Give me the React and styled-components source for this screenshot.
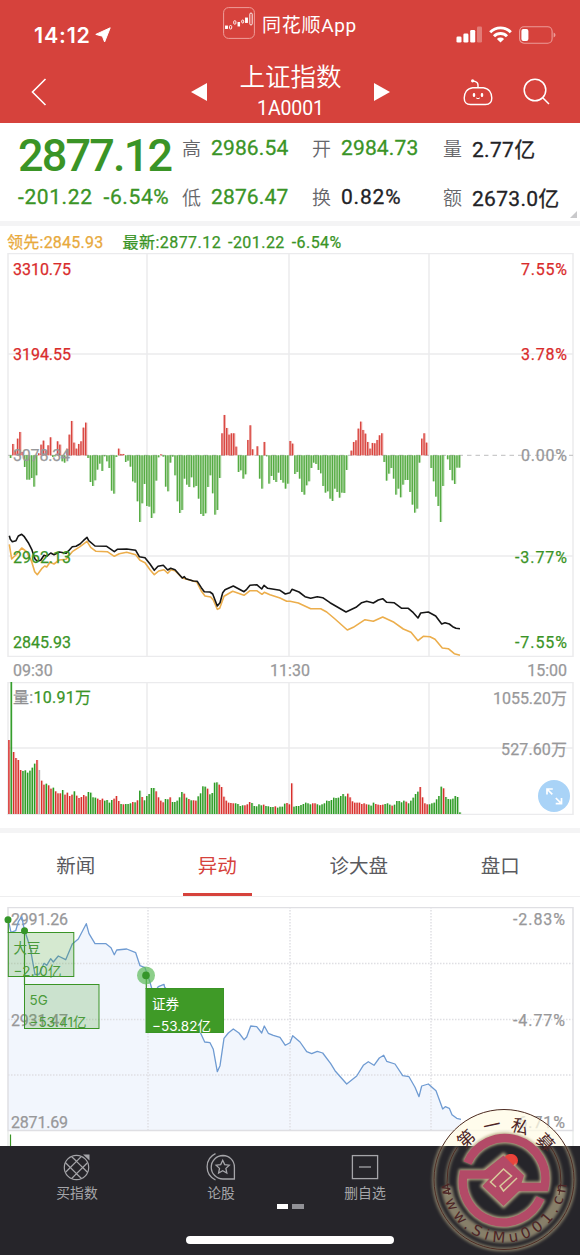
import styled, { createGlobalStyle } from "styled-components";

const RED = "#d6423c";
const UP = "#d92b2b";
const DOWN = "#3a9426";
const GREY = "#98989a";
const LINE = "#ebebed";

const GlobalStyle = createGlobalStyle`
  * {
    box-sizing: border-box;
  }
  body {
    margin: 0;
    background: #fff;
    font-family: Roboto, "Noto Sans CJK SC", sans-serif;
  }
  svg {
    display: block;
    flex: none;
  }
`;

const Screen = styled.div`
  position: relative;
  width: 580px;
  height: 1255px;
  overflow: hidden;
  display: flex;
  flex-direction: column;
`;

/* header */

const Header = styled.header`
  height: 123px;
  flex: none;
  background: ${RED};
  color: #fff;
`;

const StatusBar = styled.div`
  display: grid;
  grid-template-columns: 187px 206px 187px;
  height: 56px;
`;

const Clock = styled.div`
  display: flex;
  align-items: center;
  gap: 4px;
  padding: 13px 0 0 34px;
  font-family: Inter, sans-serif;
  font-size: 21.5px;
  font-weight: 600;
  letter-spacing: 0.8px;
`;

const AppName = styled.div`
  display: flex;
  align-items: center;
  justify-content: center;
  gap: 7px;
  height: 46px;
  font-size: 19px;
  letter-spacing: 0.7px;
`;

const StatusIcons = styled.div`
  display: flex;
  justify-content: flex-end;
  align-items: center;
  gap: 7px;
  padding: 13px 24px 0 0;
`;

const TitleBar = styled.div`
  display: flex;
  align-items: center;
  height: 67px;
  padding: 4px 30px 0 31px;
`;

const TitleSwitch = styled.div`
  display: flex;
  align-items: center;
  gap: 31px;
  margin-left: 144px;
`;

const TitleText = styled.div`
  width: 105px;
  text-align: center;
`;

const Name = styled.div`
  font-size: 25.5px;
  line-height: 31px;
  font-weight: 350;
  white-space: nowrap;
`;

const Code = styled.div`
  font-size: 19.5px;
  line-height: 26px;
  padding-top: 3px;
  letter-spacing: -0.1px;
`;

const HeaderIcons = styled.div`
  display: flex;
  align-items: center;
  gap: 30px;
  margin-left: auto;
`;

/* quote */

const Quote = styled.section`
  position: relative;
  display: flex;
  height: 98px;
  flex: none;
`;

const PriceBox = styled.div`
  width: 182px;
  padding-left: 18px;
  color: ${DOWN};
  white-space: nowrap;
`;

const Price = styled.div`
  height: 61px;
  line-height: 65px;
  font-size: 45px;
  font-weight: 500;
  letter-spacing: -1.8px;
`;

const Change = styled.div`
  display: flex;
  gap: 11px;
  line-height: 27px;
  font-size: 21px;
  letter-spacing: 0.6px;
  -webkit-text-stroke: 0.3px;
`;

const Stats = styled.div`
  display: grid;
  grid-template-columns: 130px 131px 130px;
  grid-template-rows: 49px 49px;
`;

const Stat = styled.div`
  display: flex;
  align-items: center;
  gap: 10px;
  font-size: 21px;
  white-space: nowrap;
  letter-spacing: ${(p) => p.$spacing || "0.15px"};
  color: ${(p) => (p.$down ? DOWN : "#222226")};
  -webkit-text-stroke: 0.3px;
`;

const StatName = styled.span`
  font-size: 19px;
  font-weight: 350;
  letter-spacing: 0;
  color: #66666a;
  -webkit-text-stroke: 0;
`;

const Corner = styled.i`
  position: absolute;
  right: 3px;
  bottom: 3px;
  border-left: 7px solid transparent;
  border-bottom: 7px solid #c9c9cb;
`;

const Band = styled.div`
  height: ${(p) => p.$size}px;
  flex: none;
  background: #f4f4f5;
`;

const Legend = styled.div`
  display: flex;
  gap: 19px;
  height: 27px;
  flex: none;
  align-items: center;
  padding: 6px 0 0 7px;
  font-size: 16px;
  line-height: 20px;
  white-space: nowrap;
  -webkit-text-stroke: 0.25px;
`;

const Leader = styled.span`
  color: #e8a93c;
  letter-spacing: 0.25px;
`;

const Latest = styled.span`
  color: ${DOWN};
  letter-spacing: 0.45px;
  word-spacing: 2.5px;
`;

/* charts */

const Plot = styled.svg`
  width: 580px;
  height: ${(p) => p.$height}px;
`;

const AxisText = styled.text`
  font-family: Roboto, "Noto Sans CJK SC", sans-serif;
  font-size: 16px;
  fill: ${(p) => p.$color || GREY};
  stroke: ${(p) => p.$color || GREY};
  stroke-width: 0.25px;
`;

const TagText = styled.text`
  font-family: Inter, "Noto Sans CJK SC", sans-serif;
  font-size: 13.5px;
  fill: ${(p) => p.$color};
`;

const Times = styled.div`
  display: flex;
  justify-content: space-between;
  align-items: center;
  height: 25px;
  flex: none;
  padding: 1px 13px 0;
  font-size: 16px;
  color: ${GREY};
  -webkit-text-stroke: 0.25px;
`;

const VolumeBox = styled.div`
  position: relative;
  height: 146px;
  flex: none;
`;

const Expand = styled.button`
  position: absolute;
  left: 538px;
  top: 98px;
  width: 32px;
  height: 32px;
  padding: 0;
  border: 0;
  border-radius: 50%;
  background: #a9d3f7;
`;

const Tabs = styled.nav`
  display: grid;
  grid-template-columns: repeat(4, 141.5px);
  padding-left: 5px;
  height: 64px;
  flex: none;
  border-bottom: 1px solid #eeeeef;
  margin-bottom: 10px;
`;

const Tab = styled.div`
  display: flex;
  align-items: center;
  justify-content: center;
  font-size: 19.5px;
  padding-top: 3px;
  color: ${(p) => (p.$active ? RED : "#5a5a5e")};
`;

const TabLabel = styled.span`
  display: flex;
  align-items: center;
  justify-content: center;
  min-width: 69px;
  height: 60px;
  border-bottom: 3px solid ${(p) => (p.$active ? RED : "transparent")};
`;

/* bottom bar */

const BottomBar = styled.footer`
  height: 109px;
  margin-top: auto;
  flex: none;
  background: #26252a;
  display: flex;
  flex-direction: column;
  align-items: center;
`;

const Actions = styled.div`
  display: grid;
  grid-template-columns: repeat(4, 144px);
  width: 100%;
  height: 58px;
  padding-left: 5px;
`;

const Action = styled.div`
  display: flex;
  flex-direction: column;
  align-items: center;
  gap: 2px;
  padding-top: 6px;
  font-size: 13.8px;
  line-height: 20px;
  color: #a5a5a9;
`;

const Dot = styled.i`
  width: 13px;
  height: 13px;
  margin: 2px 0 0 4px;
  border-radius: 50%;
  background: #ee3c35;
`;

const Pager = styled.div`
  display: flex;
  gap: 4px;
`;

const Page = styled.i`
  width: 11.5px;
  height: 5px;
  background: ${(p) => (p.$active ? "#fff" : "#919196")};
`;

const HomeBar = styled.div`
  width: 208px;
  height: 8px;
  margin-top: 27px;
  border-radius: 4px;
  background: #fff;
`;

const StampLayer = styled.svg`
  position: absolute;
  left: 428px;
  top: 1104px;
`;

// heights are in thirds of a pixel, positive is a rise
const FLOW = `-8 34 14 50 70 10 -35 -73 -73 -68 -94 -60 6 32 44 14 30 54 -5 -3 42 32 -18 -22 20 62 103 38 20 34
42 83 98 -8 -80 -92 -75 -43 -25 -47 -3 -18 -38 -106 -115 -5 20 4 4 -20 -16 -34 -78 -82 -138 -200 -144 -86 -152 -154
-188 -174 -76 -6 3 -4 -94 -108 -22 -4 -60 -138 -173 -164 -70 -88 -95 -66 -96 -92 -130 -176 -182 -174 -95 -60 -114 -178
-164 -68 66 121 82 62 66 66 26 -50 -45 -70 -57 46 90 18 0 27 -70 -100 40 -3 -85 -62 -74 -80 -52 -74 -82 -100 -85 43 35
-56 -50 -70 -110 -118 -90 -78 -38 -22 -26 -44 -54 -92 -112 -108 -130 -137 -100 -110 -127 -112 -113 -44 0 14 40 45 80
101 76 65 40 20 37 36 46 60 66 -20 -76 -55 -38 -70 -118 -100 -126 -88 -74 -74 -110 -148 -172 -160 -22 50 66 38 0 -38
-78 -124 -152 -200 -92 0 -12 -44 -75 -86 -37 -37`.split(/\s+/).map(Number);

const VOLUME = `r222 g396 r186 r168 r162 r132 g129 g131 g124 g130 g139 g151 r162 x132 r100 r88 g91 r86 r76 g79 r68 r62 r62
g72 r58 r64 r54 r58 g68 r55 r48 r51 r57 r53 g66 g64 g50 g49 r46 r42 r46 g40 g42 g34 g42 r46 r54 r39 g30 r29 g30 g30 g32
r36 g35 r41 g70 r51 g41 g54 g60 g78 g78 r68 r50 r40 r35 g45 g44 r50 g36 g36 g40 g50 g66 r61 g49 r45 g41 r41 r40 g53 g62
g83 g82 r76 g59 g63 g94 g95 r88 r81 r52 r40 r34 r33 r32 g32 g30 g24 g26 r26 r29 r36 g33 g24 g23 g29 g26 r28 g24 g23 g21
g21 r23 g19 g22 g22 g31 r33 r29 r92 g22 g24 g24 g27 g30 g34 g32 g29 r32 r32 g29 g26 g29 g32 g40 g39 g42 g49 g48 g49 g54
g60 g53 r61 r50 r38 r34 r34 r34 r30 r32 r29 g28 g25 g34 r30 r28 r27 r28 g30 g32 g28 r25 g28 g39 g39 g35 g40 r37 g32 g40
g49 g60 g67 r81 r50 r32 r29 g29 g32 g34 g44 g54 g82 r77 g51 g45 g44 g46 g54 g51 g5`.split(/\s+/);

const INDEX_LINE = `28,47 31,58 37,65 48,62 55,48 65,43 73,50 85,68 95,88 105,117 112,124 122,121 132,106 140,109 152,99
162,104 178,96 198,100 206,92 217,80 228,79 240,72 250,62 261,52 266,62 285,78 320,79 343,95 352,88 380,87 407,91
418,110 435,113 450,132 463,151 474,139 490,136 503,150 512,145 525,149 547,174 553,170 558,176 580,183 592,184 604,203
613,215 630,216 638,222 652,258 660,248 668,218 675,209 700,198 732,215 740,208 750,196 770,194 785,207 792,196 803,205
840,211 856,222 870,218 876,208 897,216 915,230 932,235 952,230 968,233 990,248 1038,276 1068,262 1085,248 1100,244
1120,249 1135,240 1148,236 1160,247 1182,248 1205,265 1225,265 1240,278 1254,294 1262,279 1285,276 1307,288 1325,312
1335,308 1348,312 1358,320 1368,325 1380,326`;

const LEAD_LINE = `28,73 35,117 48,104 65,84 80,95 95,125 104,155 112,164 125,146 134,138 140,141 150,127 162,132 178,120
198,118 217,95 240,80 261,64 272,82 288,94 322,95 343,109 358,101 380,97 407,104 420,121 435,128 450,149 463,164 476,153
492,149 503,160 513,149 525,152 547,174 558,177 590,186 604,213 615,228 632,231 640,240 652,268 659,265 672,229 698,214
732,226 750,212 770,212 786,223 793,217 810,224 840,234 860,244 870,244 895,249 932,266 962,266 980,276 1005,297 1042,330
1060,322 1095,299 1120,304 1148,291 1182,307 1210,327 1233,337 1254,362 1270,349 1290,350 1305,358 1327,384 1345,386
1363,401 1380,406`;

const EVENT_LINE = `25,60 33,97 47,92 55,65 65,50 73,88 90,140 105,224 118,222 132,190 140,196 152,176 160,186 175,168
197,179 217,132 235,117 259,71 267,101 285,131 318,131 333,143 343,164 350,150 380,147 407,158 420,197 435,203 448,240
456,268 468,270 475,260 492,253 494,262 520,290 600,395 614,426 630,428 640,448 652,515 660,497 672,415 685,399 700,387
717,399 732,419 740,411 752,378 770,380 785,399 793,378 805,400 820,406 840,412 856,436 870,428 878,407 900,426 920,455
935,461 952,454 968,459 992,491 1005,512 1040,552 1070,528 1090,496 1105,485 1122,496 1138,474 1151,466 1160,484 1185,492
1208,527 1227,530 1245,562 1257,590 1265,558 1285,552 1308,572 1328,627 1336,620 1348,625 1356,644 1370,655 1383,658`;

const STEP = 2.35;
const VOLUME_STEP = 451 / (VOLUME.length - 1);

const toPath = (line, dy) =>
  line
    .split(/\s+/)
    .map((pair, i) => {
      const [x, y] = pair.split(",").map(Number);
      return `${i ? "L" : "M"}${(x / 3).toFixed(1)} ${(y / 3 + dy).toFixed(1)}`;
    })
    .join("");

const Grid = ({ xs, ys, height, dash, color = LINE }) => (
  <g stroke={color} fill="none">
    <rect x="8" y="0.5" width="565" height={height} strokeWidth="1.5" />
    <g strokeDasharray={dash} strokeWidth="1.5">
      {xs.map((x) => (
        <path key={x} d={`M${x} 0V${height}`} />
      ))}
      {ys.map((y) => (
        <path key={y} d={`M8 ${y}H573`} />
      ))}
    </g>
  </g>
);

const Axis = ({ x, y, w, children, ...rest }) => (
  <AxisText x={x} y={y} textLength={w} {...rest}>
    {children}
  </AxisText>
);

function TrendChart() {
  return (
    <Plot $height={404} viewBox="0 0 580 404">
      <Grid xs={[147, 289, 429]} ys={[101, 303]} height={403} />
      <path d="M8 202.3H573" stroke="#bdbdbf" strokeDasharray="4.5 4" />
      {FLOW.map((v, i) => {
        const x = 10.4 + i * STEP;
        const h = Math.abs(v) / 3;
        const y = v > 0 ? 202.3 - h : 202.3;
        return (
          <g key={i} fill={v > 0 ? "#d9453f" : "#55ab42"}>
            <rect x={x - 0.6} y={y} width={STEP} height={h} opacity="0.4" />
            <rect x={x - 0.6} y={y} width="1.3" height={h} />
          </g>
        );
      })}
      <path d={toPath(LEAD_LINE, 267)} fill="none" stroke="#ecae4c" strokeWidth="1.6" strokeLinejoin="round" />
      <path d={toPath(INDEX_LINE, 267)} fill="none" stroke="#161616" strokeWidth="1.6" strokeLinejoin="round" />
      <Axis x="13" y="22" w="58" $color={UP}>3310.75</Axis>
      <Axis x="13" y="107" w="58" $color={UP}>3194.55</Axis>
      <Axis x="13" y="208" w="57">3078.34</Axis>
      <Axis x="13" y="310" w="58" $color={DOWN}>2962.13</Axis>
      <Axis x="13" y="395" w="58" $color={DOWN}>2845.93</Axis>
      <Axis x="521" y="22" w="46" $color={UP}>7.55%</Axis>
      <Axis x="521" y="107" w="46" $color={UP}>3.78%</Axis>
      <Axis x="521" y="208" w="46">0.00%</Axis>
      <Axis x="515" y="310" w="52" $color={DOWN}>-3.77%</Axis>
      <Axis x="515" y="395" w="52" $color={DOWN}>-7.55%</Axis>
    </Plot>
  );
}

const BAR_COLORS = { r: "#d8302c", g: "#2b9a22", x: "#b3b3b8" };

function VolumeChart() {
  return (
    <Plot $height={133} viewBox="0 0 580 133">
      <Grid xs={[147, 289, 429]} ys={[66]} height={132} />
      {VOLUME.map((bar, i) => {
        const h = Number(bar.slice(1)) / 3;
        const x = 8.2 + i * VOLUME_STEP;
        return (
          <g key={i} fill={BAR_COLORS[bar[0]]}>
            <rect x={x} y={132 - h} width={VOLUME_STEP} height={h} opacity="0.2" />
            <rect x={x} y={132 - h} width="1.4" height={h} />
          </g>
        );
      })}
      <AxisText x="13" y="21" textLength="78" $color={DOWN}>
        <tspan fill="#8f8f91" stroke="#8f8f91">量:</tspan>10.91万
      </AxisText>
      <Axis x="493" y="22" w="74">1055.20万</Axis>
      <Axis x="501" y="73" w="66">527.60万</Axis>
    </Plot>
  );
}

function EventChart() {
  const path = toPath(EVENT_LINE, -7);
  return (
    <Plot $height={239} viewBox="0 0 580 239">
      <path d={`${path}V223H8V13Z`} fill="#f2f6fd" />
      <Grid xs={[148, 290, 431]} ys={[56.5, 112.5, 168]} height={223} dash="1.5 1.5" color="#dfdfe3" />
      <path d="M8 224V239M573 224V239" stroke="#dfe3e0" />
      <path d="M10.5 227.5V239" stroke={DOWN} strokeWidth="1.2" />
      <Axis x="11" y="18" w="57">2991.26</Axis>
      <Axis x="11" y="119" w="57">2931.47</Axis>
      <Axis x="11" y="221" w="57">2871.69</Axis>
      <Axis x="513" y="18" w="52">-2.83%</Axis>
      <Axis x="513" y="119" w="52">-4.77%</Axis>
      <Axis x="513" y="221" w="52">-6.71%</Axis>
      <path d={path} fill="none" stroke="#6f9bd2" strokeWidth="1.3" strokeLinejoin="round" />
      <g stroke={DOWN} fill="#3f9a27">
        <path d="M8.3 12V26M24.5 23V78M146.3 68V82" strokeWidth="1.2" />
        <rect x="8.3" y="25.5" width="65.5" height="44" fillOpacity="0.22" />
        <rect x="24.5" y="77.5" width="74.5" height="44" fillOpacity="0.22" />
        <rect x="146" y="81.5" width="77.5" height="44" />
      </g>
      <g fill="#35962a">
        <circle cx="8" cy="12.7" r="3.5" />
        <circle cx="24.5" cy="23.7" r="3.5" />
        <circle cx="146" cy="68.4" r="9" fill="#5dba59" fillOpacity="0.7" />
        <circle cx="146" cy="68.4" r="3.8" />
      </g>
      <TagText x="13.5" y="46" $color="#4a9a3a">大豆</TagText>
      <TagText x="13.5" y="68.5" textLength="48" $color="#4a9a3a">−2.10亿</TagText>
      <TagText x="29.5" y="97.5" $color="#4a9a3a">5G</TagText>
      <TagText x="29.5" y="120" textLength="57" $color="#4a9a3a">−53.41亿</TagText>
      <TagText x="152" y="101.5" $color="#fff">证券</TagText>
      <TagText x="152" y="123.5" textLength="59" $color="#fff">−53.82亿</TagText>
    </Plot>
  );
}

/* icons */

const LocationIcon = () => (
  <svg width="16" height="16" viewBox="0 0 16 16" fill="#fff">
    <path d="M15.2 0.8L9.6 15L7.4 9.2L0.8 7.4Z" stroke="#fff" strokeWidth="1" strokeLinejoin="round" />
  </svg>
);

const AppIcon = () => (
  <svg width="32" height="32" viewBox="0 0 32 32" fill="none" stroke="#fff">
    <rect x="0.6" y="0.6" width="30.8" height="30.8" rx="5" stroke="#f0a8a4" strokeWidth="0.9" />
    <g strokeWidth="0.9">
      <rect x="2.5" y="19" width="2" height="2.5" fill="#fff" />
      <rect x="6.5" y="18.5" width="2.2" height="3.5" rx="1" />
      <rect x="10.7" y="13.7" width="2.2" height="3.5" rx="1" />
      <rect x="15" y="15.5" width="1.6" height="3.5" fill="#fff" />
      <rect x="18.7" y="13" width="2" height="3" rx="1" />
      <rect x="22.5" y="11" width="2" height="4.5" fill="#fff" />
      <rect x="26.8" y="6" width="2.4" height="12" rx="1.2" />
    </g>
  </svg>
);

const SignalIcon = () => (
  <svg width="26" height="17" viewBox="0 0 26 17" fill="#fff">
    <rect x="0.5" y="10.5" width="5" height="6" rx="1.3" />
    <rect x="7.4" y="7.5" width="5" height="9" rx="1.3" />
    <rect x="14.2" y="4" width="5" height="12.5" rx="1.3" />
    <rect x="21" y="0.5" width="5" height="16" rx="1.3" opacity="0.3" />
  </svg>
);

const WifiIcon = () => (
  <svg width="23" height="17" viewBox="0 0 23 17" fill="none" stroke="#fff" strokeWidth="2.9">
    <path d="M1.2 6.2A14.5 14.5 0 0 1 21.8 6.2" />
    <path d="M5 10.2A9.2 9.2 0 0 1 18 10.2" />
    <path d="M11.5 16.5L7.9 12.9A5.1 5.1 0 0 1 15.1 12.9Z" fill="#fff" stroke="none" />
  </svg>
);

const BatteryIcon = () => (
  <svg width="37" height="18" viewBox="0 0 37 18" fill="none">
    <rect x="0.6" y="0.8" width="32.5" height="16.4" rx="4.5" stroke="#ec9c98" strokeWidth="1.1" />
    <rect x="2.4" y="3" width="7" height="12" rx="2" fill="#fff" />
    <path d="M34.6 6.5Q36.5 7.2 36.5 9T34.6 11.5Z" fill="#ec9c98" />
  </svg>
);

const BackIcon = () => (
  <svg width="16" height="28" viewBox="0 0 16 28" fill="none" stroke="#fff" strokeWidth="1.6">
    <path d="M14.5 1L1.5 14L14.5 27" />
  </svg>
);

const Triangle = ({ right }) => (
  <svg width="16" height="18" viewBox="0 0 16 18" fill="#fff">
    <path d={right ? "M0 0L16 9L0 18Z" : "M16 0L0 9L16 18Z"} />
  </svg>
);

const RobotIcon = () => (
  <svg width="30" height="28" viewBox="0 0 30 28" fill="none" stroke="#fff" strokeWidth="1.4">
    <path d="M9.7 9.7H20.3C26 10.3 28.8 15 28.8 20Q28.8 26.5 22.5 26.5H7.5Q1.2 26.5 1.2 20C1.2 15 4 10.3 9.7 9.7Z" />
    <path d="M15 9.5V7Q15 4.6 12.5 3.6L10 2.8" />
    <circle cx="9.6" cy="2.8" r="1.6" fill="#fff" stroke="none" />
    <path d="M11 16.3V17.7M19 16.3V17.7" strokeWidth="2.4" strokeLinecap="round" />
    <path d="M13.2 20Q15 21.4 16.8 20" strokeWidth="1" />
  </svg>
);

const SearchIcon = () => (
  <svg width="27" height="27" viewBox="0 0 27 27" fill="none" stroke="#fff" strokeWidth="1.5">
    <circle cx="12" cy="12" r="10.8" />
    <path d="M19.7 19.7L26 26" />
  </svg>
);

const ExpandIcon = () => (
  <svg width="32" height="32" viewBox="0 0 32 32" fill="none" stroke="#fff" strokeWidth="1.7">
    <path d="M9 14.5V9H14.8M9 9L14.3 14.3M23.5 18V23.7H17.7M23.5 23.7L17.8 18" />
  </svg>
);

const BuyIcon = () => (
  <svg width="28" height="29" viewBox="0 0 28 29" fill="none" stroke="#a5a5a9" strokeWidth="1.2">
    <circle cx="13.5" cy="15.5" r="12.2" />
    <path d="M13.5 9.3L19.7 15.5L13.5 21.7L7.3 15.5Z" />
    <path d="M13.5 9.3L18.3 4.5M13.5 21.7L8.7 26.5M13.5 9.3L8.5 4.5M13.5 21.7L18.5 26.5M7.3 15.5L2.3 10.5M19.7 15.5L24.7 20.5M7.3 15.5L2.8 20M19.7 15.5L24.2 11" />
    <path d="M20 2.5H26.5V8.5Z" fill="#a5a5a9" stroke="none" />
  </svg>
);

const DiscussIcon = () => (
  <svg width="30" height="29" viewBox="0 0 30 29" fill="none" stroke="#a5a5a9" strokeWidth="1.3">
    <path d="M17 3.5A11.5 11.5 0 0 0 17 27H28.4V15A11.5 11.5 0 0 0 17 3.5Z" />
    <path d="M9.5 1.7A14.5 14.5 0 0 0 9.5 28" />
    <path d="M16.7 8.3L18.7 12.6L23.3 13.2L19.9 16.4L20.8 21L16.7 18.7L12.6 21L13.5 16.4L10.1 13.2L14.7 12.6Z" />
  </svg>
);

const RemoveIcon = () => (
  <svg width="28" height="29" viewBox="0 0 28 29" fill="none" stroke="#a5a5a9" strokeWidth="1.3">
    <rect x="1.4" y="3.6" width="25.2" height="23" />
    <path d="M8 15H20" />
  </svg>
);

const StampText = styled.text`
  font-family: ${(p) => (p.$latin ? '"DejaVu Sans", sans-serif' : '"Noto Sans CJK SC", sans-serif')};
  font-size: ${(p) => (p.$latin ? 15 : 17.5)}px;
  fill: #4d2526;
`;

// round seal that floats over the lower right corner
function Stamp() {
  return (
    <StampLayer width="152" height="151" viewBox="428 1104 152 151" fill="none">
      <defs>
        <filter id="halo" x="-20%" y="-20%" width="140%" height="140%">
          <feGaussianBlur stdDeviation="1.6" />
        </filter>
        <clipPath id="paper">
          <rect x="428" y="1104" width="152" height="42" />
        </clipPath>
        <clipPath id="below">
          <rect x="428" y="1146" width="152" height="109" />
        </clipPath>
        <path id="top" d="M454.5 1180A49.5 49.5 0 0 1 553.5 1180" />
        <path id="bottom" d="M441.5 1180A62.5 62.5 0 0 0 566.5 1180" />
      </defs>
      <g clipPath="url(#paper)">
        <circle cx="504" cy="1179.5" r="70.5" fill="#fffbe6" fillOpacity="0.75" />
        <circle cx="504" cy="1181" r="40" fill="#29282a" />
      </g>
      <g clipPath="url(#below)">
        <g stroke="#b5aa88" filter="url(#halo)">
          <circle cx="504" cy="1179.5" r="70" strokeWidth="3.5" opacity="0.7" />
          <path d="M457.5 1147A57 57 0 0 0 449 1195M550.5 1147A57 57 0 0 1 559 1195" strokeWidth="3" opacity="0.6" />
          <path d="M446.5 1187A58 58 0 0 0 561.5 1187" strokeWidth="11" opacity="0.68" />
        </g>
      </g>
      <circle cx="504" cy="1179.5" r="70" stroke="#4c2a22" />
      <path d="M457.5 1147A57 57 0 0 0 449 1195M550.5 1147A57 57 0 0 1 559 1195" stroke="#4c2a22" />
      <g stroke="#b9ad88" filter="url(#halo)">
        <g strokeWidth="11">
          <path d="M467.5 1163A40.5 40.5 0 0 1 544.5 1187H517" />
          <path d="M540.5 1198A40.5 40.5 0 0 1 463.5 1174.5H491" />
        </g>
        <path d="M484 1171L503.5 1155L524 1175.5L519 1191L503.5 1206L482.5 1186L491 1177Z" strokeWidth="4" />
      </g>
      <g stroke="#b34a67" strokeWidth="8.5">
        <path d="M467.5 1163A40.5 40.5 0 0 1 544.5 1187H517" />
        <path d="M540.5 1198A40.5 40.5 0 0 1 463.5 1174.5H491" />
      </g>
      <circle cx="510" cy="1160" r="6" fill="#e8443c" />
      <path d="M484 1171L503.5 1155.5L524 1175.5L519 1191L503.5 1206L482.5 1186L491 1177Z" fill="#b34a67" />
      <path
        d="M496 1187L490.5 1182L503.5 1169L511.5 1176L500 1186L503.5 1191L517 1178"
        stroke="#d8cb9c"
        strokeWidth="1.5"
      />
      <StampText><textPath href="#top" startOffset="32">第</textPath></StampText>
      <StampText><textPath href="#top" startOffset="58">一</textPath></StampText>
      <StampText><textPath href="#top" startOffset="83.5">私</textPath></StampText>
      <StampText><textPath href="#top" startOffset="110">募</textPath></StampText>
      <StampText $latin>
        <textPath href="#bottom" startOffset="4" textLength="188">www.SiMu001.cn</textPath>
      </StampText>
    </StampLayer>
  );
}

const stats = [
  { name: "高", value: "2986.54", down: true },
  { name: "开", value: "2984.73", down: true },
  { name: "量", value: "2.77亿", spacing: "0.3px" },
  { name: "低", value: "2876.47", down: true },
  { name: "换", value: "0.82%", spacing: "0.8px" },
  { name: "额", value: "2673.0亿", spacing: "0.3px" },
];

const tabs = ["新闻", "异动", "诊大盘", "盘口"];

export default function App() {
  return (
    <Screen>
      <GlobalStyle />
      <Header>
        <StatusBar>
          <Clock>14:12<LocationIcon /></Clock>
          <AppName><AppIcon />同花顺App</AppName>
          <StatusIcons>
            <SignalIcon />
            <WifiIcon />
            <BatteryIcon />
          </StatusIcons>
        </StatusBar>
        <TitleBar>
          <BackIcon />
          <TitleSwitch>
            <Triangle />
            <TitleText>
              <Name>上证指数</Name>
              <Code>1A0001</Code>
            </TitleText>
            <Triangle right />
          </TitleSwitch>
          <HeaderIcons>
            <RobotIcon />
            <SearchIcon />
          </HeaderIcons>
        </TitleBar>
      </Header>

      <Quote>
        <PriceBox>
          <Price>2877.12</Price>
          <Change><span>-201.22</span><span>-6.54%</span></Change>
        </PriceBox>
        <Stats>
          {stats.map((s) => (
            <Stat key={s.name} $down={s.down} $spacing={s.spacing}>
              <StatName>{s.name}</StatName>
              {s.value}
            </Stat>
          ))}
        </Stats>
        <Corner />
      </Quote>
      <Band $size={5} />

      <Legend>
        <Leader>领先:2845.93</Leader>
        <Latest>最新:2877.12 -201.22 -6.54%</Latest>
      </Legend>
      <TrendChart />
      <Times>
        <span>09:30</span>
        <span>11:30</span>
        <span>15:00</span>
      </Times>
      <VolumeBox>
        <VolumeChart />
        <Expand><ExpandIcon /></Expand>
      </VolumeBox>
      <Band $size={5} />

      <Tabs>
        {tabs.map((t, i) => (
          <Tab key={t} $active={i === 1}>
            <TabLabel $active={i === 1}>{t}</TabLabel>
          </Tab>
        ))}
      </Tabs>
      <EventChart />

      <BottomBar>
        <Actions>
          <Action><BuyIcon />买指数</Action>
          <Action><DiscussIcon />论股</Action>
          <Action><RemoveIcon />删自选</Action>
          <Action><Dot /></Action>
        </Actions>
        <Pager>
          <Page $active />
          <Page />
        </Pager>
        <HomeBar />
      </BottomBar>
      <Stamp />
    </Screen>
  );
}
